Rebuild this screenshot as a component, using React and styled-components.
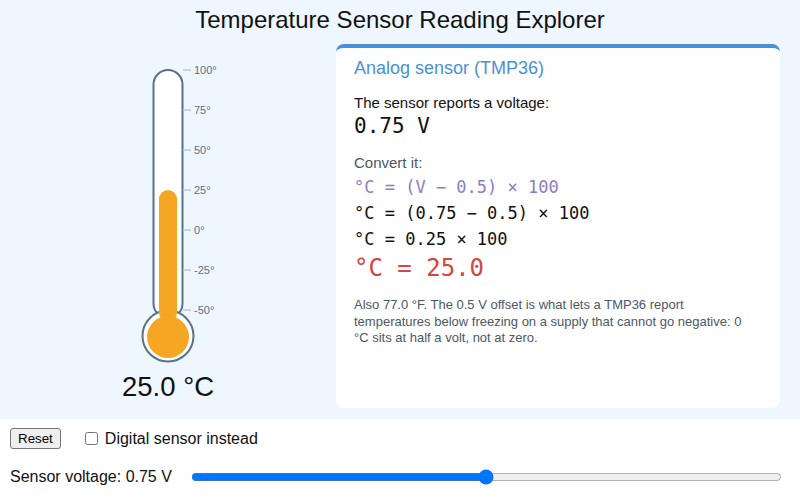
import React, { useState } from "react";
import styled, { createGlobalStyle } from "styled-components";

const GlobalStyle = createGlobalStyle`
  body {
    margin: 0;
    font-family: "Liberation Sans", Arial, sans-serif;
    color: #111;
    background: #fff;
  }
`;

//light blue top area: title, thermometer and the card
const Stage = styled.div`
  height: 419px;
  background: #eef6ff;
  display: flex;
  flex-direction: column;
`;

const Title = styled.h1`
  margin: 0 0 10px;
  padding-top: 6px;
  font-size: 24px;
  line-height: 28px;
  font-weight: normal;
  text-align: center;
`;

const Main = styled.div`
  flex: 1;
  display: grid;
  grid-template-columns: 336px 444px;
  padding-bottom: 11px;
`;

const Gauge = styled.div`
  display: flex;
  flex-direction: column;
  align-items: center;

  svg {
    display: block;
    margin-top: 16px;
  }
`;

const Reading = styled.div`
  margin-top: 1px;
  font-size: 27.5px;
`;

const Card = styled.div`
  background: #fff;
  border-top: 4px solid #4a90d9;
  border-radius: 8px;
  padding: 10px 24px 12px 18px;
`;

const Heading = styled.h2`
  margin: 0 0 15px;
  font-size: 18px;
  font-weight: normal;
  color: #4a90d9;
`;

const Label = styled.div`
  font-size: 15px;
  color: ${(p) => p.color || "#111"};
`;

//monospace lines of the conversion
const Mono = styled.div`
  font-family: "DejaVu Sans Mono", "Liberation Mono", monospace;
  font-size: ${(p) => p.size}px;
  line-height: ${(p) => p.lh || "normal"};
  color: ${(p) => p.color || "#111"};
`;

const Voltage = styled(Mono)`
  margin: 3px 0 16px;
`;

const Formulas = styled.div`
  margin-top: 3px;
`;

const Note = styled.p`
  margin: 12px 0 0;
  font-size: 13px;
  line-height: 16.5px;
  color: #4a5868;
`;

//controls under the blue area
const Controls = styled.div`
  padding: 9px 16px 0 10px;
`;

const Row = styled.div`
  display: flex;
  align-items: center;
  gap: ${(p) => p.gap}px;
  margin-bottom: ${(p) => p.mb || 0}px;
  font-size: 16px;
`;

const Button = styled.button`
  font-family: "Liberation Sans", Arial, sans-serif;
  font-size: 13.33px;
  padding: 2px 7px;
  background: #efefef;
  border: 1px solid #767676;
  border-radius: 3px;
  color: #000;
`;

const Check = styled.label`
  display: flex;
  align-items: center;

  input {
    margin: 0 7px 0 4px;
    width: 13px;
    height: 13px;
  }
`;

const Slider = styled.input`
  flex: 1;
  margin: 2px;
`;

const ticks = [100, 75, 50, 25, 0, -25, -50];
const yOf = (t) => 230 - t * 1.6;

function Thermometer({ celsius }) {
  const top = yOf(Math.max(-55, Math.min(105, celsius)));
  return (
    <svg width="120" height="310" viewBox="108 60 120 310">
      <rect x="153.5" y="70" width="29" height="248" rx="14.5" fill="#fff" stroke="#5a7088" strokeWidth="2" />
      <circle cx="168" cy="336" r="25.5" fill="#fff" stroke="#5a7088" strokeWidth="2" />
      <rect x="159" y={top} width="18" height={322 - top} rx="9" fill="#f5a623" />
      <circle cx="168" cy="337" r="21" fill="#f5a623" />
      {ticks.map((t) => (
        <g key={t}>
          <line x1="183" x2="191" y1={yOf(t)} y2={yOf(t)} stroke="#b8c8d8" strokeWidth="1.5" />
          <text x="194" y={yOf(t) + 4} fontSize="11" fill="#5a7088" fontFamily="Liberation Sans, Arial, sans-serif">
            {t}°
          </text>
        </g>
      ))}
    </svg>
  );
}

export default function App() {
  const [volts, setVolts] = useState(0.75);
  const [digital, setDigital] = useState(false);

  const celsius = (volts - 0.5) * 100;
  const fahrenheit = (celsius * 9) / 5 + 32;

  return (
    <>
      <GlobalStyle />
      <Stage>
        <Title>Temperature Sensor Reading Explorer</Title>
        <Main>
          <Gauge>
            <Thermometer celsius={celsius} />
            <Reading>{celsius.toFixed(1)} °C</Reading>
          </Gauge>
          <Card>
            <Heading>{digital ? "Digital sensor (DS18B20)" : "Analog sensor (TMP36)"}</Heading>
            <Label>The sensor reports a voltage:</Label>
            <Voltage size={21}>{volts.toFixed(2)} V</Voltage>
            <Label color="#4a5868">Convert it:</Label>
            <Formulas>
              <Mono size={17} lh="26px" color="#8e7cc3">°C = (V − 0.5) × 100</Mono>
              <Mono size={17} lh="26px">°C = ({volts.toFixed(2)} − 0.5) × 100</Mono>
              <Mono size={17} lh="26px">°C = {(volts - 0.5).toFixed(2)} × 100</Mono>
              <Mono size={24} lh="33px" color="#d64545">°C = {celsius.toFixed(1)}</Mono>
            </Formulas>
            <Note>
              Also {fahrenheit.toFixed(1)} °F. The 0.5 V offset is what lets a TMP36 report
              temperatures below freezing on a supply that cannot go negative: 0 °C sits at
              half a volt, not at zero.
            </Note>
          </Card>
        </Main>
      </Stage>
      <Controls>
        <Row gap={20} mb={18}>
          <Button onClick={() => { setVolts(0.75); setDigital(false); }}>Reset</Button>
          <Check>
            <input type="checkbox" checked={digital} onChange={(e) => setDigital(e.target.checked)} />
            Digital sensor instead
          </Check>
        </Row>
        <Row gap={17}>
          <span>Sensor voltage: {volts.toFixed(2)} V</span>
          <Slider
            type="range"
            min="0"
            max="1.5"
            step="0.01"
            value={volts}
            onChange={(e) => setVolts(parseFloat(e.target.value))}
          />
        </Row>
      </Controls>
    </>
  );
}
